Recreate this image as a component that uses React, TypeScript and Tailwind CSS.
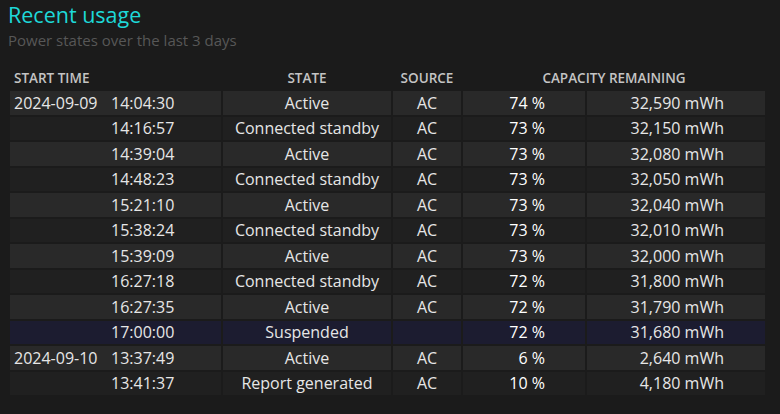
import React from 'react';

type Row = {
  date?: string;
  time: string;
  state: string;
  source: string;
  pct: string;
  mwh: string;
  suspended?: boolean;
};

const rows: Row[] = [
  { date: '2024-09-09', time: '14:04:30', state: 'Active', source: 'AC', pct: '74 %', mwh: '32,590 mWh' },
  { time: '14:16:57', state: 'Connected standby', source: 'AC', pct: '73 %', mwh: '32,150 mWh' },
  { time: '14:39:04', state: 'Active', source: 'AC', pct: '73 %', mwh: '32,080 mWh' },
  { time: '14:48:23', state: 'Connected standby', source: 'AC', pct: '73 %', mwh: '32,050 mWh' },
  { time: '15:21:10', state: 'Active', source: 'AC', pct: '73 %', mwh: '32,040 mWh' },
  { time: '15:38:24', state: 'Connected standby', source: 'AC', pct: '73 %', mwh: '32,010 mWh' },
  { time: '15:39:09', state: 'Active', source: 'AC', pct: '73 %', mwh: '32,000 mWh' },
  { time: '16:27:18', state: 'Connected standby', source: 'AC', pct: '72 %', mwh: '31,800 mWh' },
  { time: '16:27:35', state: 'Active', source: 'AC', pct: '72 %', mwh: '31,790 mWh' },
  { time: '17:00:00', state: 'Suspended', source: '', pct: '72 %', mwh: '31,680 mWh', suspended: true },
  { date: '2024-09-10', time: '13:37:49', state: 'Active', source: 'AC', pct: '6 %', mwh: '2,640 mWh' },
  { time: '13:41:37', state: 'Report generated', source: 'AC', pct: '10 %', mwh: '4,180 mWh' },
];

export default function App() {
  return (
    <div
      className="w-[780px] h-[414px] overflow-hidden bg-[#1b1b1b] text-[#e6e6e6]"
      style={{ fontFamily: '"Open Sans", "Noto Sans", sans-serif' }}
    >
      <div className="px-2">
        <h1 className="text-[21.5px] leading-[30px] text-[#1ed8d8]">Recent usage</h1>
        <p className="text-[15px] leading-[20px] text-[#575757]">Power states over the last 3 days</p>
      </div>

      <table className="mt-[15px] ml-2 w-[759px] table-fixed border-separate border-spacing-[2px] text-[16px] leading-[20px]">
        <colgroup>
          <col className="w-[211px]" />
          <col className="w-[168px]" />
          <col className="w-[68px]" />
          <col className="w-[122px]" />
          <col className="w-[178px]" />
        </colgroup>
        <thead>
          <tr className="text-[13.5px] uppercase text-[#c4c4c4]">
            <th className="h-[22px] p-0 pl-1 text-left font-semibold">Start time</th>
            <th className="p-0 font-semibold">State</th>
            <th className="p-0 font-semibold">Source</th>
            <th colSpan={2} className="p-0 font-semibold">Capacity remaining</th>
          </tr>
        </thead>
        <tbody>
          {rows.map((r, i) => {
            const bg = r.suspended ? 'bg-[#1c1c30]' : i % 2 === 0 ? 'bg-[#292929]' : 'bg-[#202020]';
            return (
              <tr key={i} className={bg}>
                <td className="h-[23.5px] p-0 pl-1 whitespace-nowrap">
                  <span className="inline-block w-[97px]">{r.date}</span>
                  <span>{r.time}</span>
                </td>
                <td className="p-0 text-center whitespace-nowrap">{r.state}</td>
                <td className="p-0 text-center">{r.source}</td>
                <td className="p-0 pr-[40px] text-right text-white">{r.pct}</td>
                <td className="p-0 pr-[41px] text-right">{r.mwh}</td>
              </tr>
            );
          })}
        </tbody>
      </table>
    </div>
  );
}
